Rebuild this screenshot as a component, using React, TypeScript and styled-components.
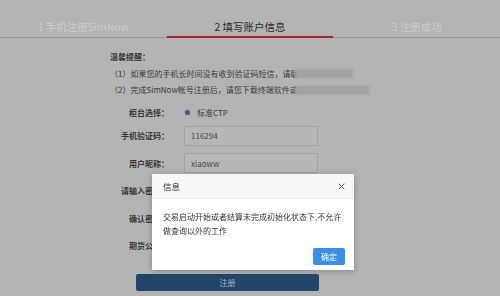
import React from "react";
import styled, { createGlobalStyle } from "styled-components";

const Global = createGlobalStyle`
  html, body { margin: 0; padding: 0; }
  body {
    width: 500px;
    height: 296px;
    overflow: hidden;
    background: #b4b4b4;
    font-family: "Noto Sans CJK SC", "Noto Sans", sans-serif;
  }
`;

const Page = styled.div`
  width: 500px;
  height: 296px;
  background: #b4b4b4;
  padding-top: 19px;
  box-sizing: border-box;
`;

const TabBar = styled.div`
  display: flex;
  border-bottom: 1px solid #979797;
`;

const Tab = styled.div<{ $active?: boolean }>`
  flex: 1;
  text-align: center;
  font-size: 10.5px;
  line-height: 16px;
  padding-bottom: 1px;
  color: ${(p) => (p.$active ? "#2c2c2c" : "#cdcdcd")};
  border-bottom: 2px solid ${(p) => (p.$active ? "#a8262a" : "transparent")};
  margin-bottom: -1px;
`;

const Notice = styled.div`
  padding-left: 110px;
  margin-top: 11px;
  font-size: 8px;
  line-height: 16.5px;
  color: #3a3a3a;
`;

const NoticeTitle = styled.div`
  font-weight: bold;
`;

const NoticeLine = styled.div`
  white-space: nowrap;
  display: flex;
  align-items: center;
`;

const Redacted = styled.span<{ $w: number }>`
  display: inline-block;
  width: ${(p) => p.$w}px;
  height: 9px;
  margin-left: -3px;
  background: #a2a2a2;
  filter: blur(1.2px);
`;

const Form = styled.div`
  margin-top: 6px;
  display: flex;
  flex-direction: column;
`;

const Row = styled.div<{ $h?: number; $gap?: number }>`
  display: flex;
  align-items: center;
  height: ${(p) => p.$h ?? 20}px;
  margin-bottom: ${(p) => p.$gap ?? 7.5}px;
`;

const Label = styled.div`
  width: 169px;
  text-align: right;
  font-size: 8px;
  font-weight: bold;
  color: #363636;
  flex-shrink: 0;
  white-space: nowrap;
`;

const Field = styled.div`
  margin-left: 15px;
  display: flex;
  align-items: center;
  font-size: 8px;
  color: #3c3c3c;
`;

const Radio = styled.span`
  width: 5px;
  height: 5px;
  border-radius: 50%;
  background: #3a5f86;
  box-shadow: 0 0 0 1px #9fa9b4;
  margin-right: 7px;
  margin-left: 1px;
`;

const Input = styled.div`
  width: 134px;
  height: 20px;
  box-sizing: border-box;
  border: 1px solid #a1a1a1;
  border-radius: 2px;
  background: #b7b7b7;
  padding-left: 6px;
  display: flex;
  align-items: center;
  font-size: 8px;
  color: #474747;
`;

const SubmitWrap = styled.div`
  padding-left: 136px;
  margin-top: 10.5px;
`;

const Submit = styled.div`
  width: 183px;
  height: 17px;
  background: #21466a;
  border-radius: 2px;
  color: #a9b3bd;
  font-size: 8px;
  display: flex;
  align-items: center;
  justify-content: center;
`;

const Dialog = styled.div`
  position: fixed;
  left: 152px;
  top: 174px;
  width: 202px;
  height: 96px;
  background: #ffffff;
  box-shadow: 0 1px 6px rgba(0, 0, 0, 0.25);
  display: flex;
  flex-direction: column;
`;

const DialogHeader = styled.div`
  height: 24px;
  background: #f8f8f8;
  border-bottom: 1px solid #eeeeee;
  display: flex;
  align-items: center;
  justify-content: space-between;
  padding: 0 9px 0 11px;
  font-size: 8.5px;
  color: #333;
`;

const Close = styled.svg`
  width: 7px;
  height: 7px;
`;

const DialogBody = styled.div`
  padding: 11px 12px 0 11px;
  font-size: 8px;
  line-height: 14px;
  color: #333;
  flex: 1;
  white-space: nowrap;
`;

const DialogFooter = styled.div`
  display: flex;
  justify-content: flex-end;
  padding: 0 9px 5px 0;
`;

const OkButton = styled.div`
  width: 32px;
  height: 17px;
  background: #3a8ee6;
  border-radius: 2px;
  color: #fff;
  font-size: 8px;
  display: flex;
  align-items: center;
  justify-content: center;
`;

const fields = [
  { label: "手机验证码：", value: "116294" },
  { label: "用户昵称：", value: "xiaoww" },
  { label: "请输入密码：", value: "" },
  { label: "确认密码：", value: "" },
  { label: "期货公司：", value: "" },
];

export default function App() {
  return (
    <>
      <Global />
      <Page>
        <TabBar>
          <Tab>1 手机注册SimNow</Tab>
          <Tab $active>2 填写账户信息</Tab>
          <Tab>3 注册成功</Tab>
        </TabBar>
        <Notice>
          <NoticeTitle>温馨提醒：</NoticeTitle>
          <NoticeLine>
            （1）如果您的手机长时间没有收到验证码短信，请联
            <Redacted $w={58} />
          </NoticeLine>
          <NoticeLine>
            （2）完成SimNow帐号注册后，请您下载终端软件或
            <Redacted $w={75} />
          </NoticeLine>
        </Notice>
        <Form>
          <Row $h={16} $gap={5}>
            <Label>柜台选择：</Label>
            <Field>
              <Radio />
              标准CTP
            </Field>
          </Row>
          {fields.map((f) => (
            <Row key={f.label}>
              <Label>{f.label}</Label>
              <Field>
                <Input>{f.value}</Input>
              </Field>
            </Row>
          ))}
        </Form>
        <SubmitWrap>
          <Submit>注册</Submit>
        </SubmitWrap>
      </Page>
      <Dialog>
        <DialogHeader>
          <span>信息</span>
          <Close viewBox="0 0 10 10">
            <path d="M1 1L9 9M9 1L1 9" stroke="#444" strokeWidth="1.3" fill="none" />
          </Close>
        </DialogHeader>
        <DialogBody>
          交易启动开始或者结算未完成初始化状态下,不允许
          <br />
          做查询以外的工作
        </DialogBody>
        <DialogFooter>
          <OkButton>确定</OkButton>
        </DialogFooter>
      </Dialog>
    </>
  );
}
